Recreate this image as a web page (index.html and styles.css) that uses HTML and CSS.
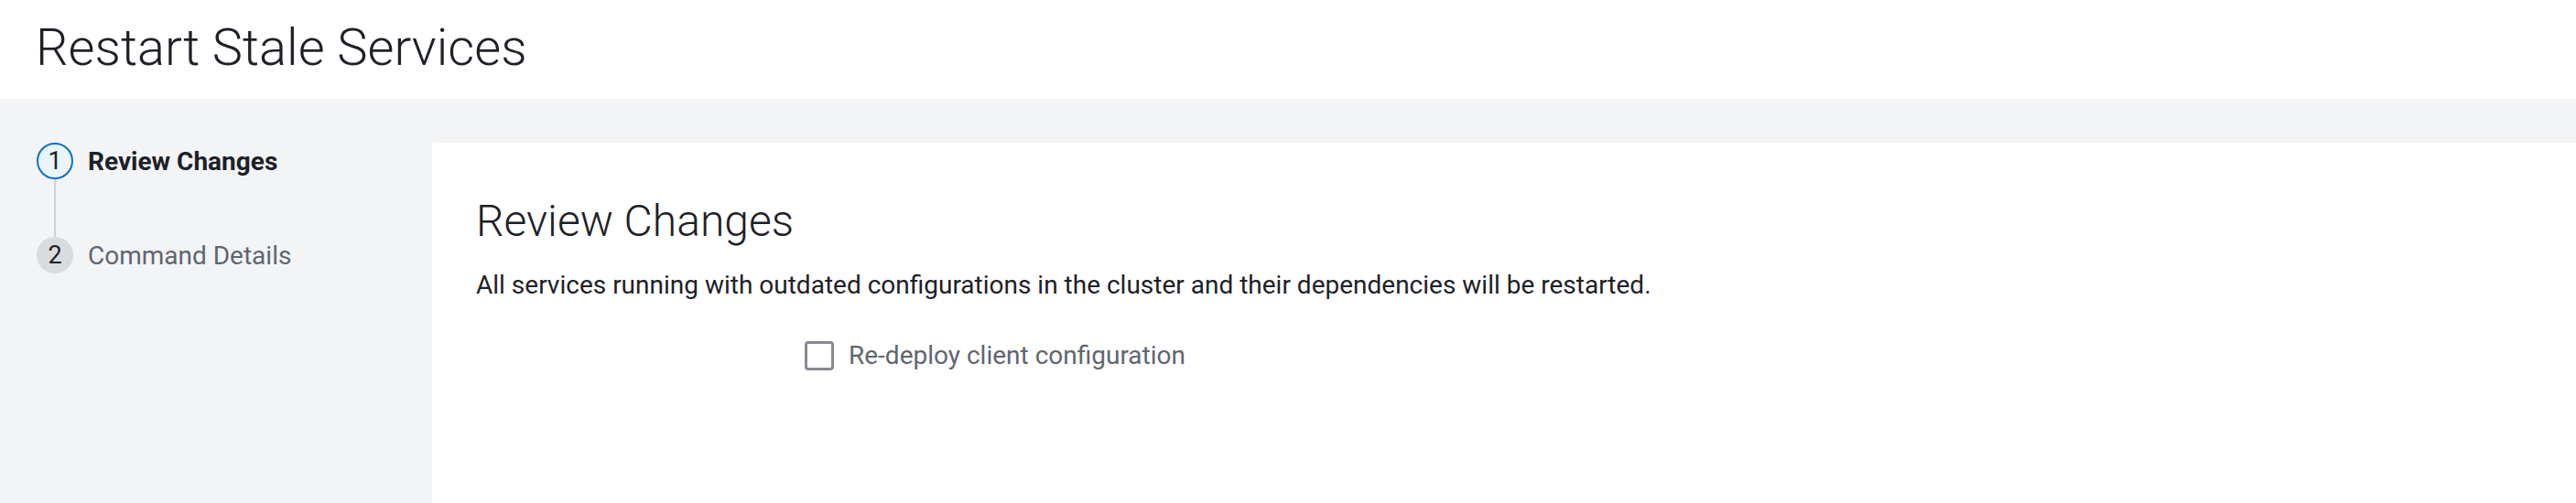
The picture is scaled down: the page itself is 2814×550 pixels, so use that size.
FILE: index.html
```html
<!DOCTYPE html>
<html lang="en">
<head>
<meta charset="utf-8">
<title>Restart Stale Services</title>
<link rel="stylesheet" href="styles.css">
</head>
<body>
<div class="page">
  <header class="page-header">
    <h1 class="page-title">Restart Stale Services</h1>
  </header>
  <div class="wizard">
    <nav class="steps">
      <div class="step step-active">
        <div class="step-marker"><span class="step-num">1</span></div>
        <span class="step-label">Review Changes</span>
      </div>
      <div class="step-connector"></div>
      <div class="step step-pending">
        <div class="step-marker"><span class="step-num">2</span></div>
        <span class="step-label">Command Details</span>
      </div>
    </nav>
    <main class="panel">
      <h2 class="panel-title">Review Changes</h2>
      <p class="panel-text">All services running with outdated configurations in the cluster and their dependencies will be restarted.</p>
      <div class="form-row">
        <div class="form-label"></div>
        <label class="checkbox">
          <span class="checkbox-box"></span>
          <span class="checkbox-label">Re-deploy client configuration</span>
        </label>
      </div>
    </main>
  </div>
</div>
</body>
</html>
```

FILE: styles.css
```css
html, body {
  margin: 0;
  padding: 0;
  height: 100%;
}
body {
  font-family: Roboto, "Liberation Sans", Arial, sans-serif;
  color: #1d2127;
  background: #f3f4f6;
  overflow: hidden;
}
.page {
  display: flex;
  flex-direction: column;
  height: 100vh;
}
.page-header {
  background: #ffffff;
  height: 108px;
  flex: none;
  box-sizing: border-box;
  padding-left: 39px;
  display: flex;
  align-items: center;
}
.page-title {
  margin: 0;
  font-weight: 300;
  font-size: 56px;
  line-height: 1;
  color: #1d2127;
  position: relative;
  top: -2px;
}
.wizard {
  flex: 1;
  min-height: 0;
  display: flex;
  padding-top: 48px;
}
.steps {
  width: 472px;
  flex: none;
  box-sizing: border-box;
  padding-left: 40px;
  display: flex;
  flex-direction: column;
}
.step {
  display: flex;
  align-items: center;
  gap: 16px;
  height: 40px;
}
.step-marker {
  width: 40px;
  height: 40px;
  box-sizing: border-box;
  border-radius: 50%;
  display: flex;
  align-items: center;
  justify-content: center;
  flex: none;
}
.step-num {
  font-size: 27px;
  line-height: 1;
}
.step-active .step-marker {
  border: 2px solid #0b72c2;
  background: #eaf4fc;
  color: #1d2127;
}
.step-active .step-label {
  font-weight: 700;
  font-size: 28px;
  color: #1d2127;
}
.step-pending .step-marker {
  background: #dadbde;
  color: #1d2127;
}
.step-pending .step-label {
  font-size: 28px;
  color: #5e6670;
}
.step-connector {
  width: 2px;
  height: 63px;
  margin-left: 19px;
  background: #cfd1d4;
}
.panel {
  flex: 1;
  background: #ffffff;
  padding: 58px 48px 0 48px;
}
.panel-title {
  margin: 0;
  font-weight: 300;
  font-size: 48px;
  line-height: 56px;
  color: #1d2127;
}
.panel-text {
  margin: 25px 0 0 0;
  font-size: 28px;
  line-height: 34px;
  color: #1d2127;
}
.form-row {
  display: grid;
  grid-template-columns: 359px auto;
  margin-top: 43px;
}
.checkbox {
  display: flex;
  align-items: center;
  gap: 16px;
}
.checkbox-box {
  width: 32px;
  height: 32px;
  box-sizing: border-box;
  border: 3px solid #898994;
  border-radius: 4px;
  background: #ffffff;
}
.checkbox-label {
  font-size: 28px;
  color: #5e6670;
}
```
